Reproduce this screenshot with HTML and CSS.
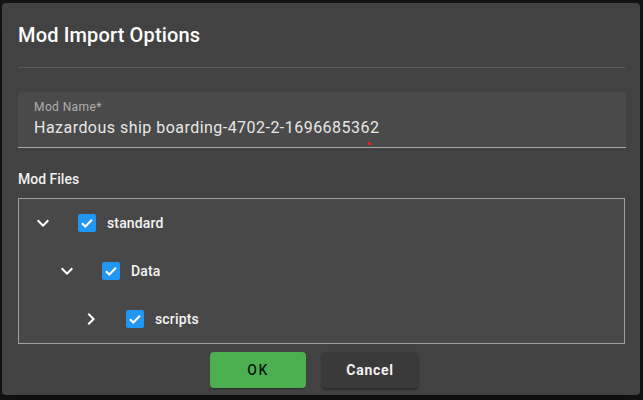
FILE: index.html
```html
<!DOCTYPE html>
<html lang="en">
<head>
<meta charset="utf-8">
<title>Mod Import Options</title>
<link rel="stylesheet" href="styles.css">
</head>
<body>
<div class="backdrop">
  <div class="dialog">
    <h2 class="title">Mod Import Options</h2>
    <hr class="divider">
    <div class="field">
      <label class="field-label">Mod Name*</label>
      <div class="field-value">Hazardous ship boarding-4702-2-1696685362</div>
      <span class="dot"></span>
    </div>
    <div class="section-label">Mod Files</div>
    <div class="tree">
      <div class="row lvl0">
        <svg class="toggle" viewBox="0 0 24 24" width="24" height="24"><path fill="#fff" d="M16.59 8.59L12 13.17 7.41 8.59 6 10l6 6 6-6z"/></svg>
        <span class="check"><svg viewBox="0 0 18 18" width="18" height="18"><path d="M4 9.2l3.3 3.3L14 5.8" fill="none" stroke="#fff" stroke-width="2.2"/></svg></span>
        <span class="name">standard</span>
      </div>
      <div class="row lvl1">
        <svg class="toggle" viewBox="0 0 24 24" width="24" height="24"><path fill="#fff" d="M16.59 8.59L12 13.17 7.41 8.59 6 10l6 6 6-6z"/></svg>
        <span class="check"><svg viewBox="0 0 18 18" width="18" height="18"><path d="M4 9.2l3.3 3.3L14 5.8" fill="none" stroke="#fff" stroke-width="2.2"/></svg></span>
        <span class="name">Data</span>
      </div>
      <div class="row lvl2">
        <svg class="toggle" viewBox="0 0 24 24" width="24" height="24"><path fill="#fff" d="M8.59 16.59L13.17 12 8.59 7.41 10 6l6 6-6 6z"/></svg>
        <span class="check"><svg viewBox="0 0 18 18" width="18" height="18"><path d="M4 9.2l3.3 3.3L14 5.8" fill="none" stroke="#fff" stroke-width="2.2"/></svg></span>
        <span class="name">scripts</span>
      </div>
    </div>
    <div class="actions">
      <button class="btn btn-ok">OK</button>
      <button class="btn btn-cancel">Cancel</button>
    </div>
  </div>
</div>
</body>
</html>
```

FILE: styles.css
```css
* { box-sizing: border-box; }
html, body {
  margin: 0;
  padding: 0;
  background: #141414;
  width: 643px;
  height: 400px;
  overflow: hidden;
  font-family: Roboto, "Liberation Sans", sans-serif;
}
.backdrop {
  padding: 3px 3px 0 2px;
}
.dialog {
  width: 638px;
  height: 392px;
  background: #424242;
  border-radius: 4px;
  padding: 16px 15px 0 16px;
  display: flex;
  flex-direction: column;
  box-shadow: 0 11px 15px -7px rgba(0,0,0,0.2), 0 24px 38px 3px rgba(0,0,0,0.14);
}
.title {
  margin: 0;
  font-size: 20px;
  line-height: 32px;
  font-weight: 500;
  letter-spacing: 0.15px;
  color: #fff;
}
.divider {
  margin: 16px 0 0;
  border: 0;
  height: 1px;
  background: #5c5c5c;
}
.field {
  position: relative;
  margin-top: 24px;
  height: 56px;
  background: #4a4a4a;
  border-radius: 4px 4px 0 0;
  border-bottom: 1px solid #a6a6a6;
  padding: 7px 16px 0;
  display: flex;
  flex-direction: column;
  margin-right: -1px;
}
.field-label {
  font-size: 12px;
  line-height: 16px;
  color: #aeaeae;
  letter-spacing: 0.4px;
}
.field-value {
  margin-top: 3px;
  font-size: 16px;
  line-height: 19px;
  color: #e6e6e6;
  letter-spacing: 0.47px;
  white-space: nowrap;
}
.dot {
  position: absolute;
  left: 350px;
  top: 50px;
  width: 3px;
  height: 3px;
  border-radius: 1px;
  background: #ff1a1a;
}
.section-label {
  margin-top: 21px;
  font-size: 14px;
  line-height: 20px;
  font-weight: 500;
  color: #f0f0f0;
}
.tree {
  margin-top: 9px;
  border: 1px solid #a0a0a0;
  background: #484848;
  display: flex;
  flex-direction: column;
}
.row {
  height: 48px;
  display: flex;
  align-items: center;
  padding-left: 12px;
}
.row.lvl1 { padding-left: 36px; }
.row.lvl2 { padding-left: 60px; }
.toggle {
  flex: none;
  display: block;
}
.check {
  flex: none;
  margin-left: 23px;
  width: 18px;
  height: 18px;
  border-radius: 2px;
  background: #2196f3;
  display: flex;
}
.name {
  margin-left: 11px;
  font-size: 14px;
  font-weight: 500;
  color: #f4f4f4;
  line-height: 20px;
  letter-spacing: 0.15px;
}
.actions {
  margin-top: 8px;
  display: flex;
  justify-content: center;
  gap: 16px;
  padding-right: 15px;
}
.btn {
  width: 96px;
  height: 36px;
  border: 0;
  border-radius: 4px;
  font-family: Roboto, "Liberation Sans", sans-serif;
  font-size: 14px;
  cursor: pointer;
}
.btn-ok {
  background: #4caf50;
  color: rgba(0,0,0,0.87);
  font-weight: 500;
  letter-spacing: 1.5px;
  box-shadow: 0 2px 1px -1px rgba(0,0,0,0.2), 0 1px 1px 0 rgba(0,0,0,0.14);
}
.btn-cancel {
  background: #3a3a3a;
  color: #f2f2f2;
  font-weight: 700;
  letter-spacing: 0.7px;
  box-shadow: 0 2px 2px 0 rgba(0,0,0,0.25), 0 1px 3px 0 rgba(0,0,0,0.2);
}
```
